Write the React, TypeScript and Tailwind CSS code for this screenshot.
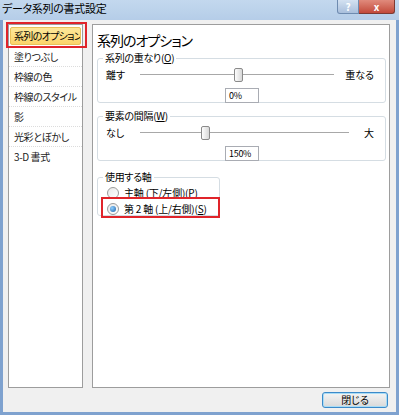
import React from 'react';

const font = { fontFamily: '"Noto Sans CJK JP", "Noto Sans", sans-serif', fontFeatureSettings: '"palt"' };

const menuItems = ['系列のオプション', '塗りつぶし', '枠線の色', '枠線のスタイル', '影', '光彩とぼかし', '3-D 書式'];

const Slider: React.FC<{ left: string; right: string; thumb: number; trackEnd: number }> = ({ left, right, thumb, trackEnd }) => (
  <div className="flex items-center h-[16px]">
    <span className="w-[42px] pl-[8px] text-[10px] leading-none whitespace-nowrap">{left}</span>
    <div className="relative h-[16px]" style={{ width: trackEnd }}>
      <div className="absolute left-0 right-0 top-[7px] h-px bg-[#a8a8a8]" />
      <div className="absolute left-0 right-0 top-[8px] h-px bg-[#ffffff]" />
      <div
        className="absolute top-[1px] w-[9px] h-[14px] rounded-[2px] border border-[#8a8a8a] bg-gradient-to-r from-[#fdfdfd] to-[#d8d8d8]"
        style={{ left: thumb }}
      />
    </div>
    <span className="flex-1 text-right pr-[11px] text-[10px] leading-none whitespace-nowrap">{right}</span>
  </div>
);

const Box: React.FC<{ value: string }> = ({ value }) => (
  <div className="flex pl-[127px] mt-[5px]">
    <div className="w-[34px] h-[15px] border border-[#a9acb3] bg-white text-[9px] leading-[13px] pl-[3px] tracking-[-0.3px]">{value}</div>
  </div>
);

const Radio: React.FC<{ checked?: boolean }> = ({ checked }) => (
  <span className="w-[12px] h-[12px] rounded-full border border-[#9a9a9a] bg-gradient-to-br from-[#e8e8e8] to-[#ffffff] flex items-center justify-center">
    {checked && <span className="w-[6px] h-[6px] rounded-full bg-[radial-gradient(circle_at_35%_35%,#8fd0ff,#1a5ea8)]" />}
  </span>
);

export default function App() {
  return (
    <div className="w-[399px] h-[415px] flex flex-col bg-[#f0f0f0] text-black overflow-hidden" style={font}>
      {/* title bar */}
      <div className="h-[20px] flex items-start bg-gradient-to-b from-[#c3d8ee] to-[#b5cde8]">
        <span className="pl-[2px] pt-[3px] text-[11px] leading-none tracking-[-0.3px] whitespace-nowrap">データ系列の書式設定</span>
        <div className="ml-auto mr-[4px] flex">
          <div className="w-[22px] h-[14px] rounded-bl-[3px] border border-[#6e8bb0] border-t-0 bg-gradient-to-b from-[#d3e1f1] to-[#a9bfdc] text-white text-[10px] leading-none font-bold flex items-center justify-center">?</div>
          <div className="w-[36px] h-[14px] rounded-br-[3px] border border-[#7e3a32] border-t-0 border-l-0 bg-gradient-to-b from-[#e08a7c] to-[#c2493a] text-white text-[10px] leading-none font-bold flex items-center justify-center">x</div>
        </div>
      </div>
      {/* body */}
      <div className="flex-1 flex flex-col border-l-[3px] border-r-[3px] border-b-[3px] border-[#7fa2cf]">
        <div className="flex pt-[4px] pl-[5px] gap-[9px]">
          {/* left list */}
          <div className="w-[75px] h-[364px] bg-white border border-[#9d9d9d] pt-[1px] relative">
            {menuItems.map((item, i) => (
              <div key={item} className={i === 0 ? 'h-[20px] px-[1px] py-[1px]' : 'h-[20px] border-t border-dotted border-[#dcdcdc] flex items-center pl-[5px]'}>
                {i === 0 ? (
                  <div className="h-full bg-gradient-to-b from-[#fde89a] to-[#fbd469] border border-[#e8c15a] rounded-[2px] flex items-center pl-[3px] text-[10px] leading-none tracking-[-0.7px] whitespace-nowrap overflow-hidden">
                    {item}
                  </div>
                ) : (
                  <span className="text-[10px] leading-none tracking-[-0.4px] text-[#222] whitespace-nowrap">{item}</span>
                )}
              </div>
            ))}
            <div className="absolute left-[-3px] top-[-3px] w-[81px] h-[26px] border-2 border-[#e0242a]" />
          </div>
          {/* right panel */}
          <div className="w-[298px] h-[364px] bg-white border border-[#9d9d9d] px-[4px]">
            <div className="pt-[8px] text-[14px] leading-none tracking-[-1px] whitespace-nowrap">系列のオプション</div>
            <fieldset className="mt-[6px] border border-[#d5dde3] rounded-[3px] h-[50px] w-[289px] px-0">
              <legend className="ml-[5px] px-[2px] text-[10px] leading-none tracking-[-0.3px] whitespace-nowrap">系列の重なり(<u>O</u>)</legend>
              <div className="mt-[4px]">
                <Slider left="離す" right="重なる" thumb={94} trackEnd={194} />
                <Box value="0%" />
              </div>
            </fieldset>
            <fieldset className="mt-[8px] border border-[#d5dde3] rounded-[3px] h-[50px] w-[289px] px-0">
              <legend className="ml-[5px] px-[2px] text-[10px] leading-none tracking-[-0.3px] whitespace-nowrap">要素の間隔(<u>W</u>)</legend>
              <div className="mt-[4px]">
                <Slider left="なし" right="大" thumb={61} trackEnd={209} />
                <Box value="150%" />
              </div>
            </fieldset>
            <fieldset className="mt-[11px] border border-[#d5dde3] rounded-[3px] h-[44px] w-[123px] px-0 relative">
              <legend className="ml-[5px] px-[2px] text-[10px] leading-none tracking-[-0.3px] whitespace-nowrap">使用する軸</legend>
              <div className="flex items-center gap-[5px] pl-[9px] mt-[4px] h-[14px]">
                <Radio />
                <span className="text-[10px] leading-none tracking-[-0.2px] whitespace-nowrap">主軸 (下/左側)(<u>P</u>)</span>
              </div>
              <div className="flex items-center gap-[5px] pl-[9px] mt-[1px] h-[16px]">
                <Radio checked />
                <span className="text-[10px] leading-none tracking-[-0.2px] whitespace-nowrap">第 2 軸 (上/右側)(<u>S</u>)</span>
              </div>
              <div className="absolute left-[3px] top-[15px] w-[119px] h-[21px] border-2 border-[#e0242a]" />
            </fieldset>
          </div>
        </div>
        {/* footer */}
        <div className="flex justify-end pr-[8px] pt-[4px]">
          <div className="w-[66px] h-[16px] rounded-[3px] border border-[#3c8ac9] bg-gradient-to-b from-[#f4f4f4] to-[#d9d9d9] shadow-[inset_0_0_0_1px_#a8dcf6] flex items-center justify-center text-[10px] leading-none">
            閉じる
          </div>
        </div>
      </div>
    </div>
  );
}
